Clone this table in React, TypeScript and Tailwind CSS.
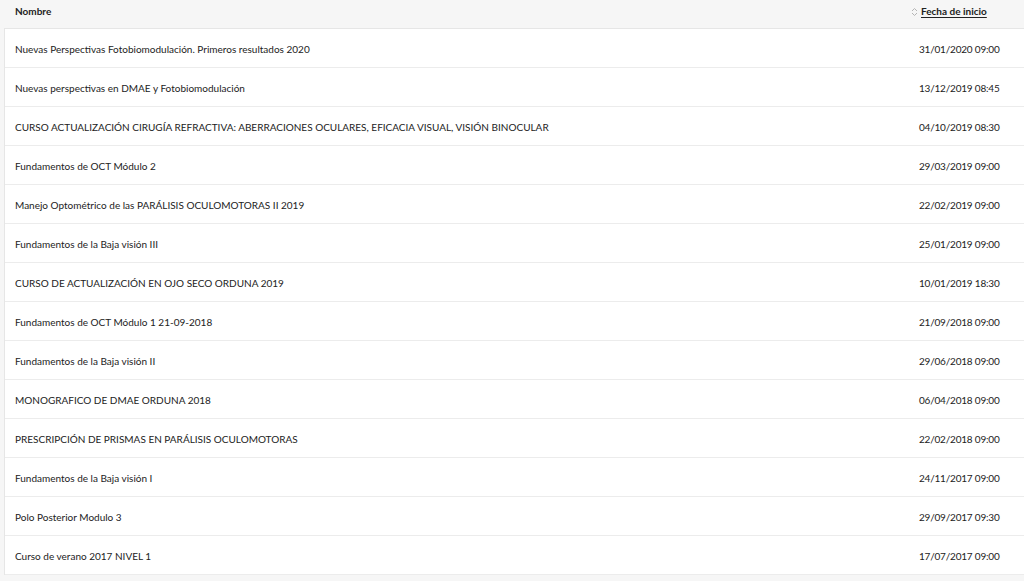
const rows: [string, string][] = [
  ["Nuevas Perspectivas Fotobiomodulación. Primeros resultados 2020", "31/01/2020 09:00"],
  ["Nuevas perspectivas en DMAE y Fotobiomodulación", "13/12/2019 08:45"],
  ["CURSO ACTUALIZACIÓN CIRUGÍA REFRACTIVA: ABERRACIONES OCULARES, EFICACIA VISUAL, VISIÓN BINOCULAR", "04/10/2019 08:30"],
  ["Fundamentos de OCT Módulo 2", "29/03/2019 09:00"],
  ["Manejo Optométrico de las PARÁLISIS OCULOMOTORAS II 2019", "22/02/2019 09:00"],
  ["Fundamentos de la Baja visión III", "25/01/2019 09:00"],
  ["CURSO DE ACTUALIZACIÓN EN OJO SECO ORDUNA 2019", "10/01/2019 18:30"],
  ["Fundamentos de OCT Módulo 1 21-09-2018", "21/09/2018 09:00"],
  ["Fundamentos de la Baja visión II", "29/06/2018 09:00"],
  ["MONOGRAFICO DE DMAE ORDUNA 2018", "06/04/2018 09:00"],
  ["PRESCRIPCIÓN DE PRISMAS EN PARÁLISIS OCULOMOTORAS", "22/02/2018 09:00"],
  ["Fundamentos de la Baja visión I", "24/11/2017 09:00"],
  ["Polo Posterior Modulo 3", "29/09/2017 09:30"],
  ["Curso de verano 2017 NIVEL 1", "17/07/2017 09:00"],
];

export default function App() {
  return (
    <div
      className="min-h-screen w-[1024px] bg-[#f6f6f6] text-[#222] text-[10px]"
      style={{ fontFamily: "Lato, 'Open Sans', sans-serif" }}
    >
      {/* Header */}
      <div className="flex h-[28px] items-start pt-[4px] pl-[15px]">
        <div className="flex-1 font-bold">Nombre</div>
        <div className="flex w-[113px] items-center gap-[3px] font-bold">
          <svg width="7" height="10" viewBox="0 0 7 10" className="text-[#b5b5b5]">
            <path d="M1 4 L3.5 1.5 L6 4 M1 6 L3.5 8.5 L6 6" fill="none" stroke="currentColor" strokeWidth="1" />
          </svg>
          <span className="underline underline-offset-2">Fecha de inicio</span>
        </div>
      </div>

      {/* Rows */}
      <div className="ml-[4px] border-l border-t border-[#e6e6e6] bg-white">
        {rows.map(([name, date]) => (
          <div key={name} className="flex h-[39px] items-center border-b border-[#ececec] pl-[10px] pt-[2px]">
            <div className="flex-1 truncate">{name}</div>
            <div className="w-[105px] tracking-[-0.2px]">{date}</div>
          </div>
        ))}
      </div>
    </div>
  );
}
